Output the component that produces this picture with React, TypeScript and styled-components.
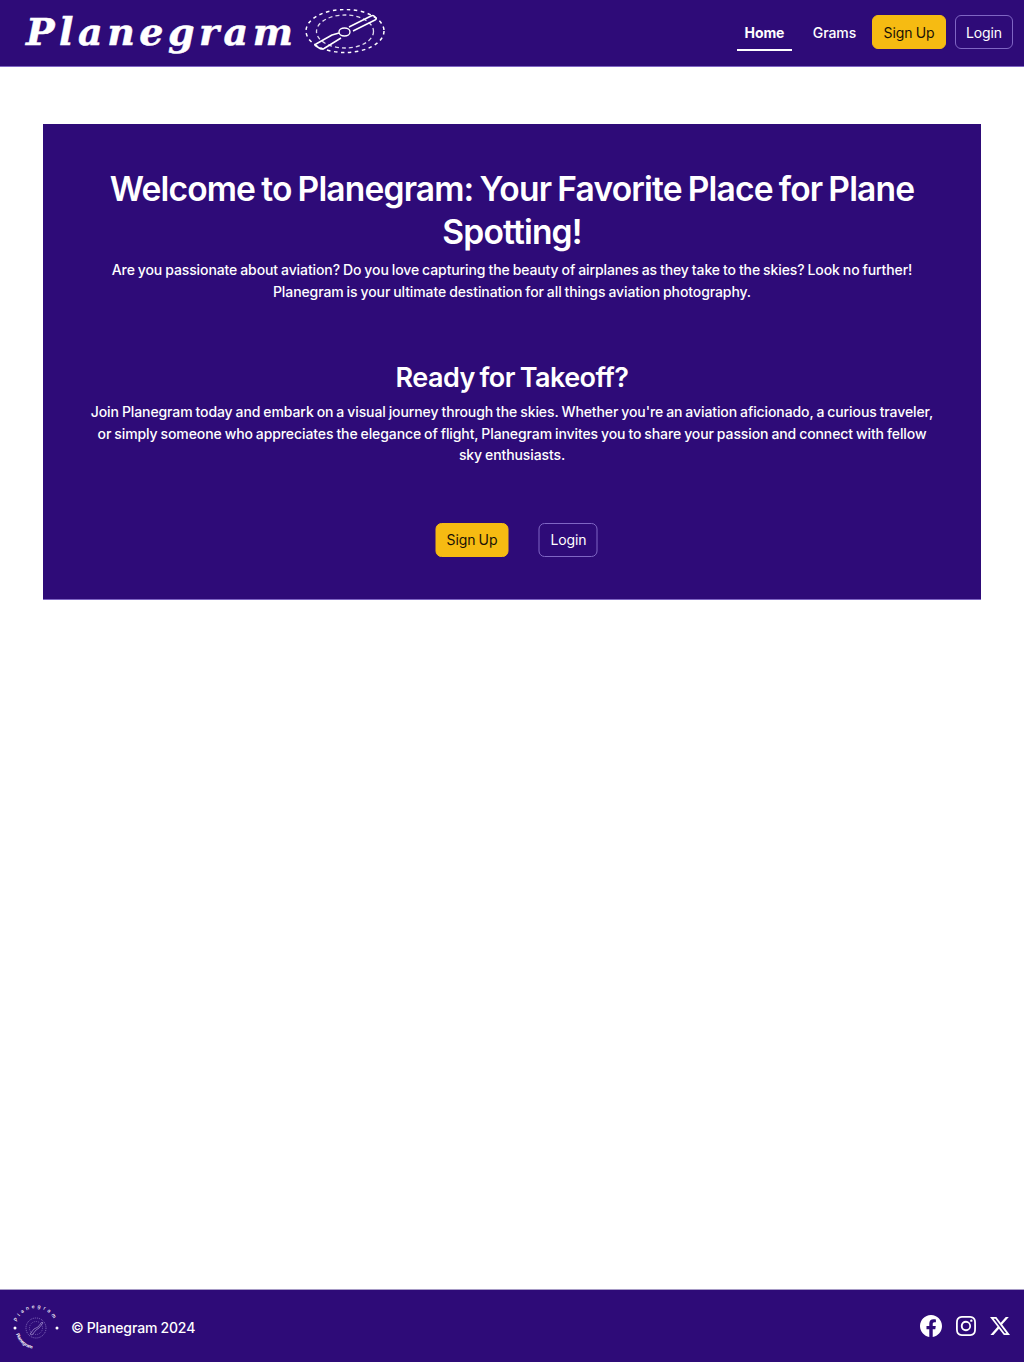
import React from "react";
import styled, { createGlobalStyle } from "styled-components";
import { BsFacebook, BsInstagram, BsTwitterX } from "react-icons/bs";

const purple = "#2e0b78";
const edge = "#7f66c4";

const Global = createGlobalStyle`
  html, body { margin: 0; padding: 0; background: #fff; }
  body { font-family: Inter, "Liberation Sans", sans-serif; color: #fff; word-spacing: -0.6px; letter-spacing: -0.1px; }
  * { box-sizing: border-box; }
`;

const Page = styled.div`
  min-height: 1362px;
  display: flex;
  flex-direction: column;
`;

const Header = styled.header`
  height: 67px;
  background: ${purple};
  border-bottom: 1px solid ${edge};
  display: flex;
  align-items: center;
  justify-content: space-between;
  padding: 0 11px 0 26px;
`;

const Brand = styled.div`
  display: flex;
  align-items: center;
  gap: 13px;
  margin-top: -2px;
`;

const Wordmark = styled.span`
  font-family: "DejaVu Serif", serif;
  font-style: italic;
  font-weight: 700;
  font-size: 38px;
  letter-spacing: 4.5px;
  line-height: 1;
  color: #fff;
  width: 266px;
  white-space: nowrap;
  -webkit-text-stroke: 0.5px #fff;
`;

const Nav = styled.nav`
  display: flex;
  align-items: center;
  margin-top: -2px;
`;

const NavLink = styled.a<{ $active?: boolean }>`
  height: 38px;
  padding: 2px ${(p) => (p.$active ? "7.5px" : "0")} 0;
  margin-right: ${(p) => (p.$active ? "21px" : "16px")};
  display: flex;
  align-items: center;
  font-size: 14px;
  font-weight: ${(p) => (p.$active ? 700 : 500)};
  color: #fff;
  border-bottom: 2px solid ${(p) => (p.$active ? "#fff" : "transparent")};
`;

const Button = styled.a<{ $primary?: boolean; $inset?: number }>`
  display: inline-flex;
  align-items: center;
  justify-content: center;
  height: 34px;
  padding: 0 ${(p) => p.$inset ?? 10.5}px;
  border-radius: 6px;
  font-size: 14px;
  font-weight: 400;
  background: ${(p) => (p.$primary ? "#f6bb12" : "transparent")};
  color: ${(p) => (p.$primary ? "#1a1206" : "#fff")};
  border: 1px solid ${(p) => (p.$primary ? "#f6bb12" : edge)};
`;

const HeaderButtons = styled.div`
  display: flex;
  gap: 9px;
`;

const Main = styled.main`
  flex: 1;
  padding: 57px 43px 0;
`;

const Hero = styled.section`
  height: 476px;
  background: ${purple};
  border-bottom: 1px solid ${edge};
  padding: 43px 44px 0;
  text-align: center;
`;

const Title = styled.h1`
  margin: 0 0 6px;
  font-size: 33.6px;
  line-height: 43px;
  font-weight: 600;
  letter-spacing: -0.85px;
  word-spacing: -1.5px;
`;

const Subtitle = styled.h2`
  margin: 58px 0 5px;
  font-size: 27px;
  line-height: 36px;
  font-weight: 600;
  letter-spacing: -0.55px;
  word-spacing: -1.5px;
`;

const Copy = styled.p`
  margin: 0;
  font-size: 14px;
  line-height: 21.6px;
  font-weight: 500;
`;

const Actions = styled.div`
  margin-top: 57px;
  display: flex;
  justify-content: center;
  gap: 30px;
  transform: translateX(4.5px);
`;

const Footer = styled.footer`
  height: 73px;
  background: ${purple};
  border-top: 1px solid #a79bc6;
  display: flex;
  align-items: center;
  justify-content: space-between;
  padding: 0 14px 0 12px;
`;

const FooterBrand = styled.div`
  display: flex;
  align-items: center;
  gap: 11px;
  padding-top: 3px;
  font-size: 14px;
  font-weight: 500;
`;

const Socials = styled.div`
  display: flex;
  align-items: center;
  gap: 14px;
  font-size: 20px;
`;

const Facebook = styled(BsFacebook)`
  font-size: 22px;
`;

const Logo = () => (
  <svg width="80" height="46" viewBox="0 0 80 46" fill="none" stroke="#fff">
    <ellipse cx="40" cy="22" rx="39" ry="21.5" strokeWidth="1.5" strokeDasharray="3.5 3.5" />
    <ellipse cx="40" cy="22.5" rx="28.5" ry="16.5" strokeWidth="1.3" strokeDasharray="4 3" opacity="0.85" />
    <ellipse cx="39.5" cy="23" rx="5.5" ry="4" strokeWidth="1.4" />
    <path
      d="M44 18 L66 7 Q68 6 69 7 L71 9 Q72 10 70 11 L48 22 M34 24 L27 26 L11 35 Q9 36 11 37 L15 39.500 Q17 40.500 19 39.500 L36 29"
      strokeWidth="1.5"
      strokeLinejoin="round"
    />
  </svg>
);

const Seal = () => (
  <svg width="48" height="48" viewBox="0 0 48 48" fill="none">
    <defs>
      <path id="seal-top" d="M5 17.800 A 20 20 0 0 1 43 17.800" />
      <path id="seal-bottom" d="M4 30 A 21 21 0 0 0 34 42.500" />
    </defs>
    <text fontFamily="Inter, sans-serif" fontSize="5" fill="#fff" letterSpacing="2.600">
      <textPath href="#seal-top">Planegram</textPath>
    </text>
    <text fontFamily="Inter, sans-serif" fontSize="4.500" fontWeight="700" fill="#fff">
      <textPath href="#seal-bottom">Planegram</textPath>
    </text>
    <circle cx="3" cy="24" r="1.500" fill="#fff" />
    <circle cx="45" cy="24" r="1.500" fill="#fff" />
    <circle cx="24" cy="24" r="10" stroke="#a897d8" strokeWidth="0.7" strokeDasharray="1 1" />
    <circle cx="24" cy="24" r="6.500" stroke="#a897d8" strokeWidth="0.5" strokeDasharray="1 1" />
    <path d="M18 30 L22 25 L26 23 L30 18 L31 19 L27 24 L24 26 L20 31 Z" stroke="#d8cff5" strokeWidth="0.5" />
  </svg>
);

export default function App() {
  return (
    <Page>
      <Global />
      <Header>
        <Brand>
          <Wordmark>Planegram</Wordmark>
          <Logo />
        </Brand>
        <Nav>
          <NavLink $active>Home</NavLink>
          <NavLink>Grams</NavLink>
          <HeaderButtons>
            <Button $primary>Sign Up</Button>
            <Button $inset={10}>Login</Button>
          </HeaderButtons>
        </Nav>
      </Header>
      <Main>
        <Hero>
          <Title>Welcome to Planegram: Your Favorite Place for Plane Spotting!</Title>
          <Copy>
            Are you passionate about aviation? Do you love capturing the beauty of airplanes as they take to the skies? Look no further! Planegram is your ultimate destination for all things aviation photography.
          </Copy>
          <Subtitle>Ready for Takeoff?</Subtitle>
          <Copy>
            Join Planegram today and embark on a visual journey through the skies. Whether you're an aviation aficionado, a curious traveler, or simply someone who appreciates the elegance of flight, Planegram invites you to share your passion and connect with fellow sky enthusiasts.
          </Copy>
          <Actions>
            <Button $primary>Sign Up</Button>
            <Button>Login</Button>
          </Actions>
        </Hero>
      </Main>
      <Footer>
        <FooterBrand>
          <Seal />
          <span>© Planegram 2024</span>
        </FooterBrand>
        <Socials>
          <Facebook />
          <BsInstagram />
          <BsTwitterX />
        </Socials>
      </Footer>
    </Page>
  );
}
